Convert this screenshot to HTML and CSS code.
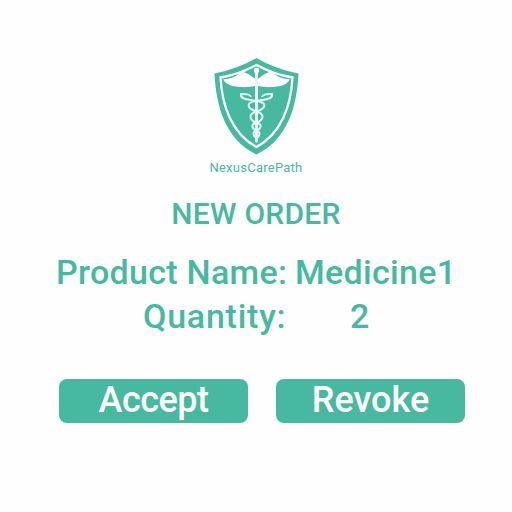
FILE: index.html
```html
<!DOCTYPE html>
<html lang="en">
<head>
<meta charset="utf-8">
<title>New order</title>
<link rel="stylesheet" href="styles.css">
</head>
<body>
<main class="order">
  <header class="brand">
    <svg class="shield" viewBox="214 57 86 99" aria-hidden="true">
      <path class="fill" d="M256.500 58 Q275 69 298.500 73.500 C297 107 287 140 256.500 154.500 C226 140 216 107 214.500 73.500 Q238 69 256.500 58Z"/>
      <path class="rim" d="M256.500 65 Q274 74.500 292.500 77.500 C291 106 281 134 256.500 147 C232 134 222 106 220.500 77.500 Q239 74.500 256.500 65Z"/>
      <path class="wing" d="M255 79 Q249 73 241 71.500 Q237 78 223 79.500 Q226 84 232 86 Q243 88 252 86.500 L255 86Z M258 79 Q264 73 272 71.500 Q276 78 290 79.500 Q287 84 281 86 Q270 88 261 86.500 L258 86Z"/>
      <path class="staff" d="M256.500 70V141"/>
      <circle class="wing" cx="256.500" cy="70.500" r="2.700"/>
      <path class="snake" d="M251 97 Q250 93.500 241 94 C240 99 247 99.500 256.500 101 C267 102.500 267 108 256.500 111.500 C248 114 249 120 256.500 122.500 C262 124 262 128.500 256.500 130.500 C252 132 253 136 256.500 138 M262 97 Q263 93.500 272 94 C273 99 266 99.500 256.500 101 C246 102.500 246 108 256.500 111.500 C265 114 264 120 256.500 122.500 C251 124 251 128.500 256.500 130.500 C261 132 260 136 256.500 138"/>
    </svg>
    <div class="brand-name">NexusCarePath</div>
  </header>
  <h1 class="title">NEW ORDER</h1>
  <div class="row product"><span class="product-label">Product Name:</span><span class="product-value">Medicine1</span></div>
  <div class="row quantity"><span class="quantity-label">Quantity:</span><span>2</span></div>
  <div class="actions">
    <button class="accept">Accept</button>
    <button class="revoke">Revoke</button>
  </div>
</main>
</body>
</html>
```
FILE: styles.css
```css
body {
  margin: 0;
  background: #fefefe;
  color: #46b9a0;
  font-family: Roboto, "Noto Sans", sans-serif;
  font-weight: 500;
}
.order {
  box-sizing: border-box;
  height: 512px;
  padding-top: 57px;
}
.brand { display: flex; flex-direction: column; align-items: center; }
.shield { display: block; width: 86px; height: 99px; margin-left: 1px; }
.fill { fill: #46b9a0; }
.rim { fill: none; stroke: #fff; stroke-width: 2.3; }
.wing { fill: #fff; }
.staff { fill: none; stroke: #e7f6f2; stroke-width: 3; stroke-linecap: round; }
.snake { fill: none; stroke: #e7f6f2; stroke-width: 2; }
.brand-name { margin-top: 4px; font-size: 13px; line-height: 16px; font-weight: 400; letter-spacing: 0.25px; }
.title { margin: 20px 0 0; font-size: 30px; line-height: 36px; font-weight: 500; letter-spacing: 0.25px; text-align: center; }
.row { display: flex; font-size: 34px; line-height: 44px; white-space: nowrap; }
.product { margin-top: 18px; padding-left: 56px; letter-spacing: 0.3px; }
.product-label { width: 239px; }
.quantity { padding-left: 143px; }
.quantity-label { width: 207px; letter-spacing: 0.75px; }
.actions { display: flex; gap: 28px; margin-top: 41px; padding-left: 59px; }
.actions button {
  width: 189px;
  height: 44px;
  padding: 0 0 2px;
  border: 0;
  border-radius: 8px;
  background: #46b9a0;
  color: #fff;
  font: 500 36px/42px Roboto, "Noto Sans", sans-serif;
}
.actions .accept { letter-spacing: -0.5px; }
```
